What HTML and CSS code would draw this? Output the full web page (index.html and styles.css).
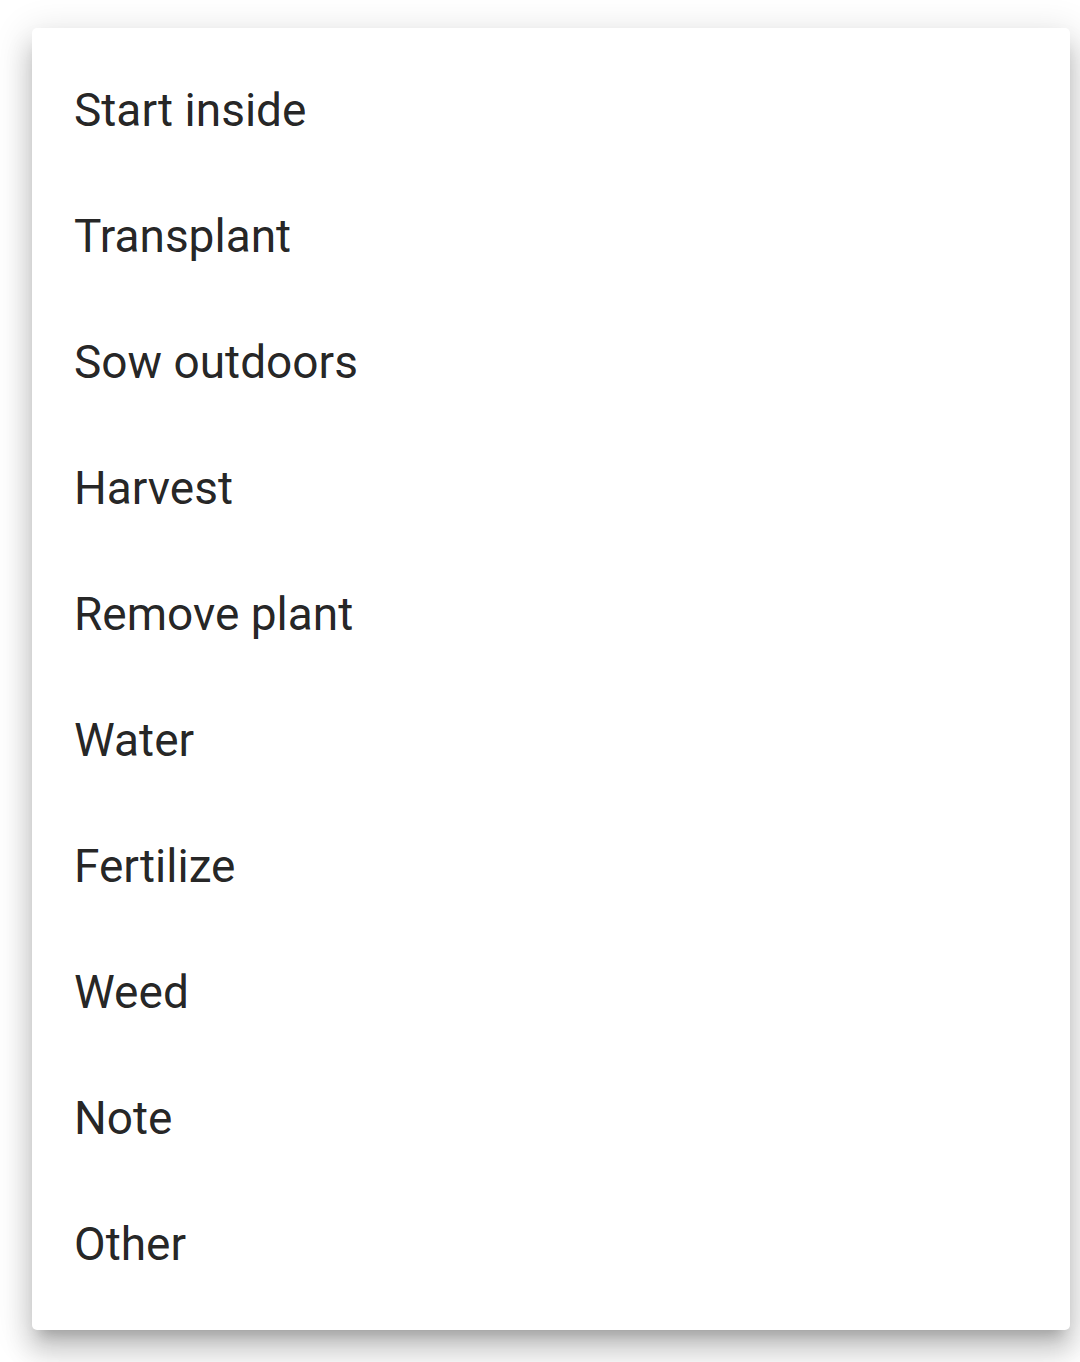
FILE: index.html
```html
<!DOCTYPE html>
<html>
<head>
<meta charset="utf-8">
<link rel="stylesheet" href="styles.css">
</head>
<body>
<div class="menu">
  <div class="item">Start inside</div>
  <div class="item">Transplant</div>
  <div class="item">Sow outdoors</div>
  <div class="item">Harvest</div>
  <div class="item">Remove plant</div>
  <div class="item">Water</div>
  <div class="item">Fertilize</div>
  <div class="item">Weed</div>
  <div class="item">Note</div>
  <div class="item">Other</div>
</div>
</body>
</html>
```
FILE: styles.css
```css
html, body {
  margin: 0;
  padding: 0;
  background: #ffffff;
  width: 1080px;
  height: 1362px;
  overflow: hidden;
}
body {
  padding: 28px 10px 0 32px;
  box-sizing: border-box;
  font-family: Roboto, "Liberation Sans", sans-serif;
}
.menu {
  width: 1038px;
  background: #fff;
  border-radius: 5px;
  padding: 21px 0;
  box-shadow: 0 13px 13px -8px rgba(0,0,0,0.2), 0 21px 26px 3px rgba(0,0,0,0.14), 0 8px 37px 5px rgba(0,0,0,0.12);
}
.item {
  height: 126px;
  box-sizing: border-box;
  display: flex;
  align-items: center;
  padding-left: 42px;
  padding-bottom: 5px;
  font-size: 46px;
  color: rgba(0,0,0,0.87);
}
```
